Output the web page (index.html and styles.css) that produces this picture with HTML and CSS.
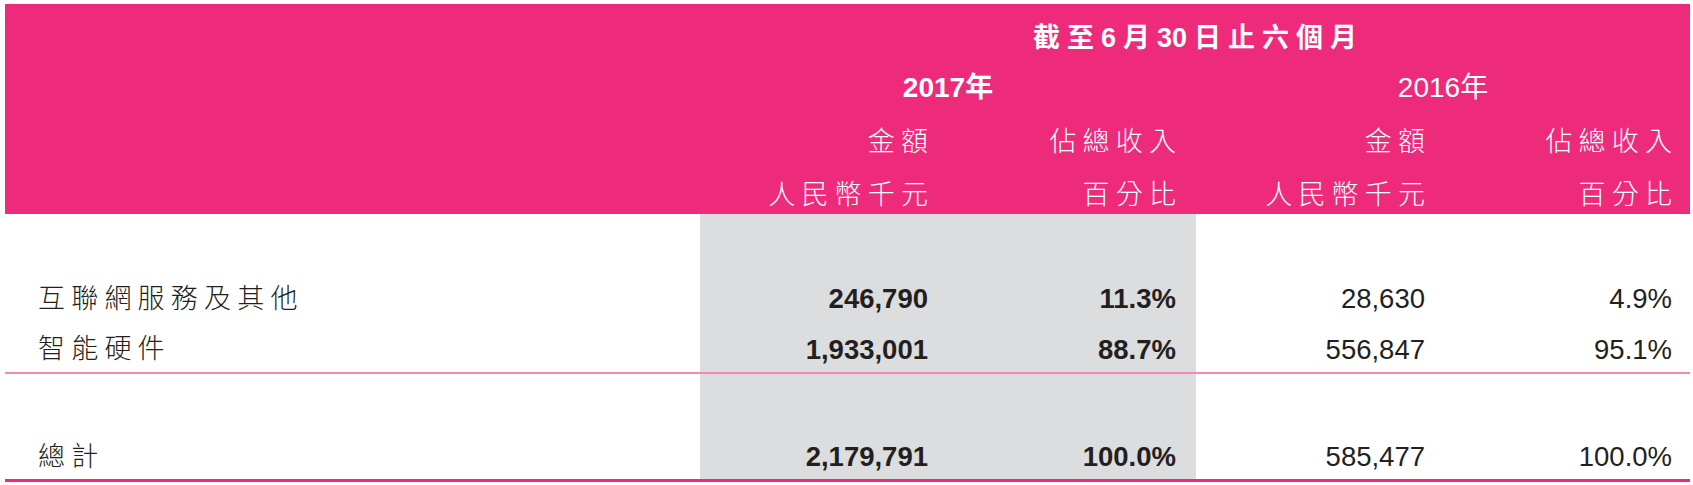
FILE: index.html
```html
<!DOCTYPE html>
<html lang="zh-Hant">
<head>
<meta charset="utf-8">
<title>收入</title>
<link rel="stylesheet" href="styles.css">
</head>
<body>
<table class="fin">
  <colgroup>
    <col class="c-label">
    <col class="c-num">
    <col class="c-num">
    <col class="c-num2">
    <col class="c-num2">
  </colgroup>
  <thead>
    <tr class="h1">
      <th></th>
      <th colspan="4" class="title"><span class="cj-t">截至6月<span class="tight">3</span>0日止六個月</span></th>
    </tr>
    <tr class="h2">
      <th></th>
      <th colspan="2" class="yr bold">2017年</th>
      <th colspan="2" class="yr">2016年</th>
    </tr>
    <tr class="h3">
      <th></th>
      <th class="num"><span class="cj">金額</span></th>
      <th class="num"><span class="cj">佔總收入</span></th>
      <th class="num n2"><span class="cj">金額</span></th>
      <th class="num n2"><span class="cj">佔總收入</span></th>
    </tr>
    <tr class="h4">
      <th></th>
      <th class="num"><span class="cj">人民幣千元</span></th>
      <th class="num"><span class="cj">百分比</span></th>
      <th class="num n2"><span class="cj">人民幣千元</span></th>
      <th class="num n2"><span class="cj">百分比</span></th>
    </tr>
  </thead>
  <tbody>
    <tr class="spacer">
      <td></td><td class="g"></td><td class="g"></td><td></td><td></td>
    </tr>
    <tr class="r1">
      <td class="label"><span class="cj">互聯網服務及其他</span></td>
      <td class="num g bold">246,790</td>
      <td class="num g bold">11.3%</td>
      <td class="num n2">28,630</td>
      <td class="num n2">4.9%</td>
    </tr>
    <tr class="r2">
      <td class="label"><span class="cj">智能硬件</span></td>
      <td class="num g bold">1,933,001</td>
      <td class="num g bold">88.7%</td>
      <td class="num n2">556,847</td>
      <td class="num n2">95.1%</td>
    </tr>
    <tr class="sep"><td colspan="5"></td></tr>
    <tr class="spacer2">
      <td></td><td class="g"></td><td class="g"></td><td></td><td></td>
    </tr>
    <tr class="total">
      <td class="label"><span class="cj">總計</span></td>
      <td class="num g bold">2,179,791</td>
      <td class="num g bold">100.0%</td>
      <td class="num n2">585,477</td>
      <td class="num n2">100.0%</td>
    </tr>
    <tr class="bottom"><td colspan="5"></td></tr>
  </tbody>
</table>
</body>
</html>
```

FILE: styles.css
```css
html, body {
  margin: 0;
  padding: 0;
  background: #ffffff;
}

body {
  font-family: "Liberation Sans", "Noto Sans CJK TC", sans-serif;
  color: #231f20;
}

.fin {
  margin: 4px 0 0 5px;
  width: 1685px;
  border-collapse: separate;
  border-spacing: 0;
  table-layout: fixed;
}

.c-label { width: 695px; }
.c-num { width: 248px; }
.c-num2 { width: 247px; }

.fin th,
.fin td {
  padding: 0;
  font-weight: 400;
}

.fin thead th {
  background: #ee2a7b;
  color: #ffffff;
  font-size: 27px;
}

.cj {
  font-family: "Noto Sans CJK TC", sans-serif;
  font-weight: 300;
  letter-spacing: 6.2px;
  margin-right: -6.2px;
  line-height: 0;
}

.cj-t {
  font-family: "Liberation Sans", "Noto Sans CJK TC", sans-serif;
  font-weight: 700;
  letter-spacing: 7px;
  margin-right: -7px;
  line-height: 0;
}

.tight {
  letter-spacing: 0;
}

.h1 th {
  padding-top: 10px;
  line-height: 48px;
}

.title {
  text-align: center;
}

.h2 th {
  padding-top: 4px;
  line-height: 44px;
}

.yr {
  text-align: center;
  font-size: 28px !important;
}

.h3 th {
  padding-top: 4px;
  line-height: 56px;
}

.h4 th {
  padding-top: 6px;
  line-height: 38px;
}

.num {
  text-align: right;
  padding-right: 20px !important;
  font-size: 27.5px;
}

.num.n2 {
  padding-right: 18px !important;
}

.bold {
  font-weight: 700 !important;
}

.label {
  padding-left: 33px !important;
  font-size: 27px;
}

.g {
  background: #dcdddf;
}

.spacer td { height: 57px; }
.spacer2 td { height: 57px; }

.r1 td {
  padding-top: 4px;
  line-height: 48px;
}

.r2 td {
  padding-top: 4px;
  line-height: 45px;
}

.total td {
  padding-top: 4px;
  line-height: 44px;
}

.sep td {
  height: 2px;
  background: #f48ab4;
  font-size: 0;
  line-height: 0;
}

.bottom td {
  height: 3px;
  background: #ee2a7b;
  font-size: 0;
  line-height: 0;
}
```
